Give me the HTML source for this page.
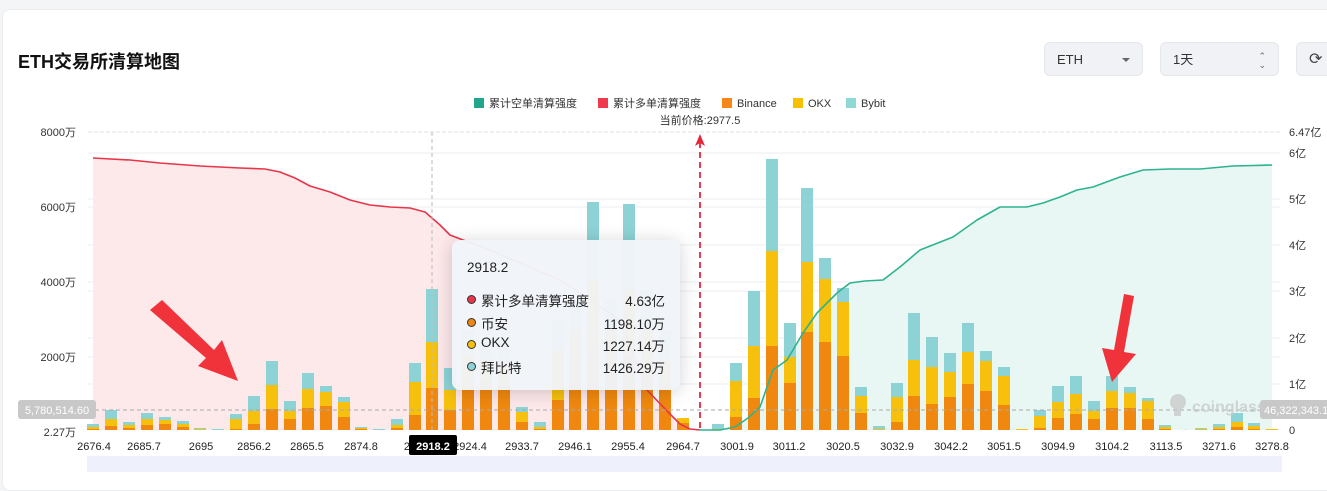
<!DOCTYPE html>
<html><head><meta charset="utf-8"><style>
html,body{margin:0;padding:0;}
body{width:1327px;height:472px;overflow:hidden;background:#f4f5f7;font-family:"Liberation Sans","Noto Sans CJK SC",sans-serif;position:relative;}
.card{position:absolute;left:2px;top:9px;width:1340px;height:480px;background:#fff;border-radius:8px;border:1px solid #ebedf0;}
.title{position:absolute;left:18px;top:48px;font-size:18px;font-weight:bold;color:#111;}
.sel{position:absolute;top:42px;height:34px;background:#f0f2f5;border-radius:6px;border:1px solid #e4e7eb;font-size:13px;color:#333;line-height:34px;box-sizing:border-box;padding-left:12px;}
svg{position:absolute;left:0;top:0;}
.tip{position:absolute;left:452px;top:240px;width:228px;height:150px;background:rgba(241,244,248,0.97);border-radius:8px;box-shadow:0 2px 18px rgba(0,0,0,0.18);font-size:13.5px;color:#222;}
.tip .h{position:absolute;left:15px;top:20px;}
.row{position:absolute;left:15px;width:198px;height:18px;}
.row .d{position:absolute;left:0;top:5px;width:7px;height:7px;border-radius:50%;border:1.5px solid #333;}
.row .n{position:absolute;left:14px;top:0;}
.row .v{position:absolute;right:0;top:0;}
</style></head><body>
<div class="card"></div>
<div class="title">ETH交易所清算地图</div>
<div class="sel" style="left:1044px;width:99px;">ETH<span style="position:absolute;right:12px;top:15px;width:0;height:0;border-left:4px solid transparent;border-right:4px solid transparent;border-top:4px solid #666;"></span></div>
<div class="sel" style="left:1160px;width:119px;">1天<span style="position:absolute;right:12px;top:0;font-size:9px;color:#666;line-height:9px;padding-top:9px;">⌃<br>⌄</span></div>
<div class="sel" style="left:1296px;width:50px;font-size:16px;color:#444;">⟳</div>

<svg width="1327" height="472" viewBox="0 0 1327 472" font-family="Liberation Sans, Noto Sans CJK SC, sans-serif">
<!-- legend -->
<g font-size="11" fill="#333">
<rect x="474" y="98" width="10" height="10" fill="#20a68a"/><text x="489" y="107">累计空单清算强度</text>
<rect x="598" y="98" width="10" height="10" fill="#ef3a4d"/><text x="613" y="107">累计多单清算强度</text>
<rect x="722" y="98" width="10" height="10" fill="#f7861b"/><text x="737" y="107">Binance</text>
<rect x="793" y="98" width="10" height="10" fill="#f8c100"/><text x="808" y="107">OKX</text>
<rect x="846" y="98" width="10" height="10" fill="#8ed8d6"/><text x="861" y="107">Bybit</text>
<text x="700" y="124" text-anchor="middle">当前价格:2977.5</text>
</g>
<!-- grid -->
<g stroke="#eceef1" stroke-width="1">
<line x1="88" y1="132" x2="1280" y2="132" stroke-dasharray="4,2" stroke="#dfe2e6"/>
<line x1="88" y1="153" x2="1280" y2="153"/><line x1="88" y1="199" x2="1280" y2="199"/>
<line x1="88" y1="207" x2="1280" y2="207"/><line x1="88" y1="245" x2="1280" y2="245"/>
<line x1="88" y1="282" x2="1280" y2="282"/><line x1="88" y1="291" x2="1280" y2="291"/>
<line x1="88" y1="338" x2="1280" y2="338"/><line x1="88" y1="357" x2="1280" y2="357"/>
<line x1="88" y1="384" x2="1280" y2="384"/>
</g>
<!-- areas -->
<path d="M93,158 L130,160 L160,163 L200,166 L240,168 L265,169 L280,172 L295,178 L310,186 L330,192 L350,200 L370,205 L390,207 L410,208 L425,212 L432,218 L440,225 L450,235 L463,240 L480,246 L560,280 L620,320 L647,390 L668,412 L680,424 L690,429 L700,430 L700,430 L93,430 Z" fill="#fde8ea"/>
<path d="M700,430 L720,430 L735,427 L748,418 L760,407 L773,370 L787,360 L803,333 L817,313 L837,293 L850,283 L865,281 L883,280 L900,267 L920,250 L953,237 L977,220 L1000,207 L1027,207 L1043,203 L1060,197 L1077,190 L1093,187 L1120,177 L1143,170 L1170,169 L1200,169 L1233,166 L1272,165 L1272,430 Z" fill="#e8f7f3"/>
<!-- bars -->
<g id="bars"></g>
<!-- lines -->
<polyline points="93,158 130,160 160,163 200,166 240,168 265,169 280,172 295,178 310,186 330,192 350,200 370,205 390,207 410,208 425,212 432,218 440,225 450,235 463,240 480,246 560,280 620,320 647,390 668,412 680,424 690,429 700,430" fill="none" stroke="#e8354a" stroke-width="1.6" stroke-linejoin="round"/>
<polyline points="700,430 720,430 735,427 748,418 760,407 773,370 787,360 803,333 817,313 837,293 850,283 865,281 883,280 900,267 920,250 953,237 977,220 1000,207 1027,207 1043,203 1060,197 1077,190 1093,187 1120,177 1143,170 1170,169 1200,169 1233,166 1272,165" fill="none" stroke="#2db38f" stroke-width="1.6" stroke-linejoin="round"/>
<!-- axis labels -->
<g font-size="11" fill="#333">
<text x="76" y="136" text-anchor="end">8000万</text>
<text x="76" y="211" text-anchor="end">6000万</text>
<text x="76" y="286" text-anchor="end">4000万</text>
<text x="76" y="361" text-anchor="end">2000万</text>
<text x="76" y="436" text-anchor="end">2.27万</text>
<text x="1289" y="136">6.47亿</text>
<text x="1289" y="157">6亿</text>
<text x="1289" y="203">5亿</text>
<text x="1289" y="249">4亿</text>
<text x="1289" y="295">3亿</text>
<text x="1289" y="342">2亿</text>
<text x="1289" y="388">1亿</text>
<text x="1289" y="434">0</text>
</g>
<g font-size="11" fill="#222" text-anchor="middle">
<text x="94" y="450">2676.4</text><text x="144" y="450">2685.7</text><text x="201" y="450">2695</text>
<text x="254" y="450">2856.2</text><text x="307" y="450">2865.5</text><text x="361" y="450">2874.8</text>
<text x="410" y="450">29</text><text x="470" y="450">2924.4</text><text x="522" y="450">2933.7</text>
<text x="575" y="450">2946.1</text><text x="628" y="450">2955.4</text><text x="683" y="450">2964.7</text>
<text x="737" y="450">3001.9</text><text x="789" y="450">3011.2</text><text x="843" y="450">3020.5</text>
<text x="897" y="450">3032.9</text><text x="951" y="450">3042.2</text><text x="1004" y="450">3051.5</text>
<text x="1058" y="450">3094.9</text><text x="1112" y="450">3104.2</text><text x="1166" y="450">3113.5</text>
<text x="1219" y="450">3271.6</text><text x="1272" y="450">3278.8</text>
</g>
<rect x="409" y="435" width="48" height="20" rx="2" fill="#000"/>
<text x="433" y="450" font-size="11" fill="#fff" text-anchor="middle" font-weight="bold">2918.2</text>
<!-- slider band -->
<rect x="87" y="456" width="1195" height="16" fill="#eef1fb"/>
<!-- crosshair / markers -->
<line x1="432" y1="132" x2="432" y2="430" stroke="#bbb" stroke-dasharray="4,3"/>
<line x1="88" y1="410" x2="1280" y2="410" stroke="#aaa" stroke-dasharray="4,3"/>
<line x1="700" y1="142" x2="700" y2="430" stroke="#e8263a" stroke-width="1.8" stroke-dasharray="6,4"/>
<path d="M700,134 L705,146 L700,143 L695,146 Z" fill="#e8263a"/>
<rect x="18" y="400" width="78" height="19" rx="3" fill="#c8c8c8"/>
<text x="57" y="414" font-size="11" fill="#fff" text-anchor="middle">5,780,514.60</text>
<rect x="1260" y="400" width="80" height="19" rx="3" fill="#c8c8c8"/>
<text x="1264" y="414" font-size="11" fill="#fff">46,322,343.1</text>
<!-- watermark -->
<g fill="#c9cccc" opacity="0.8">
<circle cx="1178" cy="402" r="8"/><rect x="1174" y="402" width="7" height="14"/>
<text x="1192" y="412" font-size="16" font-weight="bold">coinglass</text>
</g>
<!-- red arrows -->
<path d="M150,310 L162,300 L214,350 L222,340 L238,381 L198,366 L206,358 Z" fill="#f0333b"/>
<path d="M1124,294 L1134,296 L1124,352 L1136,354 L1112,382 L1102,348 L1114,350 Z" fill="#f0333b"/>
</svg>

<div class="tip">
<div class="h">2918.2</div>
<div class="row" style="top:50px;"><span class="d" style="background:#e8354a"></span><span class="n">累计多单清算强度</span><span class="v">4.63亿</span></div>
<div class="row" style="top:73px;"><span class="d" style="background:#f0860f"></span><span class="n">币安</span><span class="v">1198.10万</span></div>
<div class="row" style="top:95px;"><span class="d" style="background:#f5bf0b"></span><span class="n">OKX</span><span class="v">1227.14万</span></div>
<div class="row" style="top:117px;"><span class="d" style="background:#8dd3d6"></span><span class="n">拜比特</span><span class="v">1426.29万</span></div>
</div>

<script>
var d=[[93,424,427,429],[111,410,419,426],[129,422,425,428],[147,413,419,425],[165,417,420,424],[183,421,424,427],[200,428,429,430],[218,429,430,430],
[236,414,419,429],[254,396,411,424],[272,361,385,409],[290,401,411,419],[308,373,389,408],[326,386,392,406],[344,397,402,417],[361,427,428,429],[379,429,430,430],
[397,419,425,428],[415,363,382,415],[432,289,342,388],[450,368,390,410],[468,330,355,388],[486,340,360,380],[504,345,365,385],[522,407,412,422],[540,422,427,429],
[558,320,350,400],[575,300,330,360],[593,202,280,350],[611,300,330,370],[629,204,290,355],[647,290,330,370],[665,330,360,385],[683,418,418,423],
[718,424,429,430],[736,363,381,417],[754,291,346,398],[772,159,251,346],[790,323,357,383],[807,188,262,332],[825,258,279,342],[843,288,302,356],[861,387,396,413],
[879,426,429,430],[897,383,397,422],[914,313,360,396],[932,337,367,404],[950,353,372,397],[968,323,352,384],[986,351,361,391],[1004,367,376,405],[1022,429,429,430],
[1040,410,416,428],[1058,386,402,418],[1076,376,394,414],[1094,401,411,419],[1112,376,391,408],[1130,387,393,408],[1148,398,401,419],[1165,425,427,429],
[1201,428,429,430],[1219,424,427,429],[1237,413,422,427],[1254,423,426,429],[1272,429,429,430]];
var s='';d.forEach(function(b){var x=b[0]-6;
s+='<rect x="'+x+'" y="'+b[1]+'" width="12" height="'+(b[2]-b[1])+'" fill="#8dd3d6"/>';
s+='<rect x="'+x+'" y="'+b[2]+'" width="12" height="'+(b[3]-b[2])+'" fill="#f6c00c"/>';
s+='<rect x="'+x+'" y="'+b[3]+'" width="12" height="'+(430-b[3])+'" fill="#f0880f"/>';});
document.getElementById('bars').innerHTML=s;
</script>
</body></html>
